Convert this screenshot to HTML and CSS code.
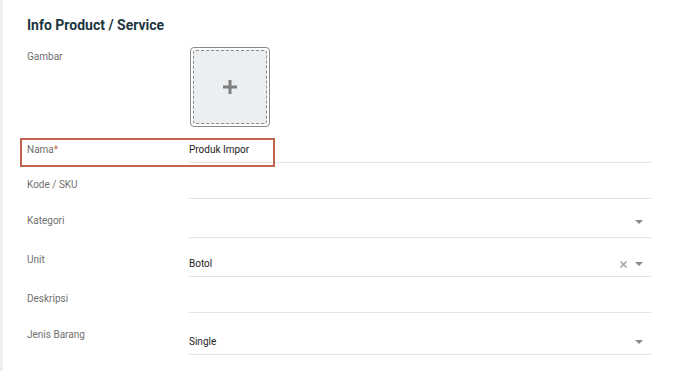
FILE: index.html
```html
<!DOCTYPE html>
<html>
<head>
<meta charset="utf-8">
<link rel="stylesheet" href="styles.css">
</head>
<body>
<div class="page">
  <div class="stripe"></div>
  <main class="content">
    <h1 class="title">Info Product / Service</h1>
    <div class="row row-image">
      <div class="label">Gambar</div>
      <div class="uploader">
        <div class="uploader-inner">
          <svg width="14" height="14" viewBox="0 0 14 14"><path d="M5.5 0h3v5.5H14v3H8.5V14h-3V8.5H0v-3h5.5z" fill="#7f7f7f"/></svg>
        </div>
      </div>
    </div>
    <div class="row row-nama">
      <div class="label">Nama<span class="req">*</span></div>
      <div class="field field-focus"><span class="value">Produk Impor</span></div>
    </div>
    <div class="row h36">
      <div class="label">Kode / SKU</div>
      <div class="field"></div>
    </div>
    <div class="row h39">
      <div class="label">Kategori</div>
      <div class="field field-select"><span class="value"></span><span class="icons"><span class="caret"></span></span></div>
    </div>
    <div class="row h39">
      <div class="label">Unit</div>
      <div class="field"><span class="value">Botol</span><span class="icons"><svg class="clear" width="7" height="7" viewBox="0 0 7 7"><path d="M0.5 0.5L6.5 6.5M6.5 0.5L0.5 6.5" stroke="#9a9a9a" stroke-width="1.3"/></svg><span class="caret"></span></span></div>
    </div>
    <div class="row h36">
      <div class="label">Deskripsi</div>
      <div class="field"></div>
    </div>
    <div class="row h42">
      <div class="label">Jenis Barang</div>
      <div class="field"><span class="value">Single</span><span class="icons"><span class="caret"></span></span></div>
    </div>
  </main>
</div>
</body>
</html>
```
FILE: styles.css
```css
* { box-sizing: border-box; }
html, body { margin: 0; padding: 0; background: #fff; }
body { font-family: Roboto, "Noto Sans", sans-serif; color: #333; width: 679px; height: 371px; overflow: hidden; }
.page { display: flex; height: 371px; }
.stripe { width: 3px; background: #eef0f1; flex: none; }
.content { flex: 1; padding: 15px 0 0 24px; }
.title { margin: 0 0 12px; font-size: 14px; font-weight: 700; color: #1d3640; line-height: 20px; }
.row { display: grid; grid-template-columns: 162px 462px; position: relative; }
.label { font-size: 10px; color: #6f6f6f; line-height: 12px; }
.row-image { height: 91px; }
.row-image .label { padding-top: 4px; }
.uploader { width: 80px; height: 80px; border: 1px solid #8a8a8a; border-radius: 4px; padding: 2px; margin-left: 1px; }
.uploader-inner { width: 100%; height: 100%; border: 1px dashed #8a8a8a; border-radius: 3px; background: #eceff1; display: flex; align-items: center; justify-content: center; }
.req { color: #c0614a; }
.row-nama { height: 25px; }
.row-nama::before { content: ""; position: absolute; left: -7px; top: 0; width: 251px; height: 25px; border: 2px solid #c0664c; pointer-events: none; }
.row-nama .label { padding-top: 6px; }
.field { border-bottom: 1px solid #e4e4e4; display: flex; align-items: flex-end; justify-content: space-between; padding-bottom: 6px; }
.field-focus { padding-bottom: 6px; }
.field-select { padding-bottom: 9px; }
.value { font-size: 10px; color: #222; line-height: 12px; }
.h36 { height: 36px; }
.h39 { height: 39px; }
.h42 { height: 42px; }
.h36 .label, .h39 .label, .h42 .label { padding-top: 16px; }
.icons { display: flex; align-items: center; gap: 8px; padding-right: 8px; height: 12px; }
.caret { width: 0; height: 0; border-left: 4px solid transparent; border-right: 4px solid transparent; border-top: 4px solid #8a8a8a; }
.clear { display: block; }
```
